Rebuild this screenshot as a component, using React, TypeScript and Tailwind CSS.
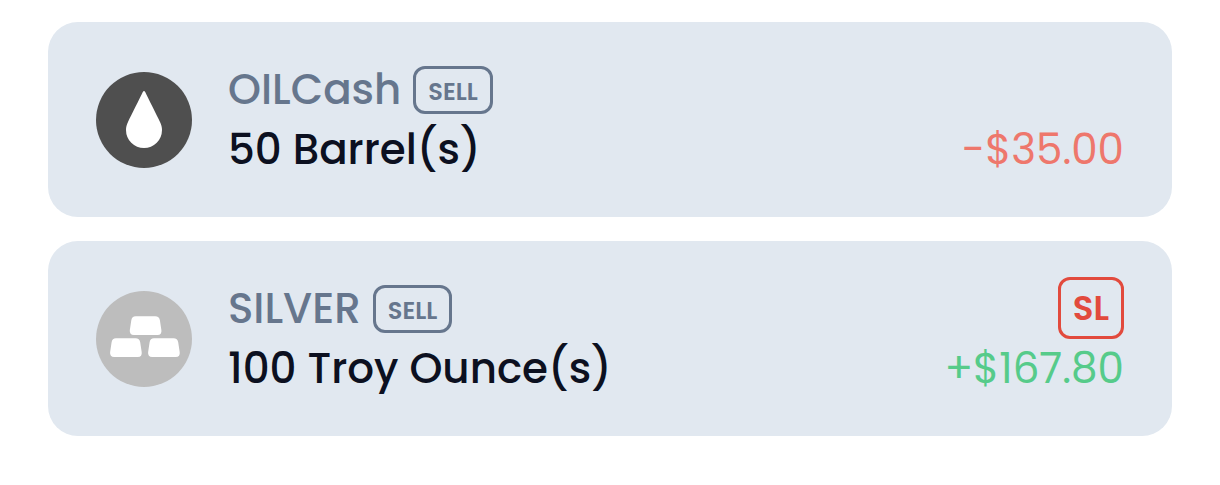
import type { ReactNode } from "react";
import clsx from "clsx";

interface Position {
    id: string;
    symbol: string;
    side: "BUY" | "SELL";
    size: string;
    profit: number;
    stopLoss?: boolean;
    icon: ReactNode;
}

const POSITIONS: Position[] = [
    {
        id: "oil",
        symbol: "OILCash",
        side: "SELL",
        size: "50 Barrel(s)",
        profit: -35,
        icon: <OilIcon />,
    },
    {
        id: "silver",
        symbol: "SILVER",
        side: "SELL",
        size: "100 Troy Ounce(s)",
        profit: 167.8,
        stopLoss: true,
        icon: <SilverIcon />,
    },
];

function formatProfit(value: number) {
    const sign = value < 0 ? "-" : "+";
    return `${sign}$${Math.abs(value).toFixed(2)}`;
}

export default function App() {
    return (
        <main className="min-h-screen bg-white px-12 pt-[22px] pb-12 font-[Poppins,Inter,sans-serif]">
            <ul className="flex flex-col gap-6">
                {POSITIONS.map((position) => (
                    <PositionCard key={position.id} position={position} />
                ))}
            </ul>
        </main>
    );
}

function PositionCard({ position }: { position: Position }) {
    const { symbol, side, size, profit, stopLoss, icon } = position;

    return (
        <li className="flex items-center rounded-[30px] bg-[#e1e8f0] px-12 py-9">
            {icon}

            <div className="ml-9 min-h-[123px] flex-1 pt-0.5 text-[42px] leading-[60px] font-medium">
                <div className="flex items-center gap-3 text-[#66768d]">
                    <h2>{symbol}</h2>
                    <span className="rounded-xl border-3 border-[#66768d] px-3 pt-1 text-[24px] leading-[38px] font-semibold">
                        {side}
                    </span>
                </div>
                <p className="text-[#0c1020]">{size}</p>
            </div>

            <div className="flex flex-col items-end self-end pb-0.5">
                {stopLoss && (
                    <span className="rounded-xl border-3 border-[#e24a3d] px-3 text-[34px] leading-[56px] font-semibold text-[#e24a3d]">
                        SL
                    </span>
                )}
                <p
                    className={clsx(
                        "text-[42px] leading-[59px]",
                        profit < 0 ? "text-[#ee776c]" : "text-[#56cb8a]",
                    )}
                >
                    {formatProfit(profit)}
                </p>
            </div>
        </li>
    );
}

/** White drop on a dark disc. */
function OilIcon() {
    return (
        <svg viewBox="0 0 96 96" className="size-24 shrink-0" aria-hidden="true">
            <circle cx="48" cy="48" r="48" fill="#4f4f4f" />
            <path
                d="M46.8 20q1.2-1.8 2.4 0C52 26 61 43.500 64 50C65.300 52.800 66 55 66 58A18 18 0 0 1 30 58C30 55 30.700 52.800 32 50C35 43.500 44 26 46.800 20Z"
                fill="#fff"
            />
        </svg>
    );
}

/** Three stacked bars on a light disc. */
function SilverIcon() {
    const bar =
        "M6 0H25.500Q29.500 0 30.200 4L31.700 14Q32.300 18.700 27.800 18.700H4.200Q-.3 18.700.1 14L1.600 4Q2.200 0 6 0Z";

    return (
        <svg viewBox="0 0 96 96" className="size-24 shrink-0" aria-hidden="true">
            <circle cx="48" cy="48" r="48" fill="#bdbdbd" />
            <g fill="#fff">
                <path d={bar} transform="translate(33.700 25.300)" />
                <path d={bar} transform="translate(14 47.200)" />
                <path d={bar} transform="translate(52 47.200)" />
            </g>
        </svg>
    );
}
